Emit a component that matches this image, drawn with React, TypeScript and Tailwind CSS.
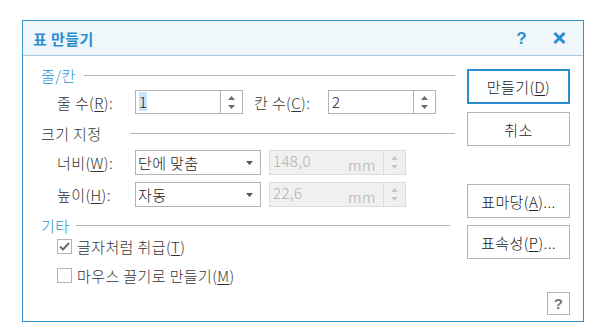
import type { ReactNode } from 'react'

const font = { fontFamily: '"Noto Sans CJK KR", "Noto Sans", sans-serif' }

function Spin({ disabled }: { disabled?: boolean }) {
  const c = disabled ? '#c8c8c8' : '#6b6b6b'
  return (
    <div className={`flex w-[22px] flex-col items-center justify-center gap-[5px] border-l ${disabled ? 'border-[#dcdcdc]' : 'border-[#b4b4b4]'}`}>
      <svg width="7" height="4" viewBox="0 0 7 4">
        <path d="M3.5 0 L7 4 L0 4 Z" fill={c} />
      </svg>
      <svg width="7" height="4" viewBox="0 0 7 4">
        <path d="M0 0 L7 0 L3.5 4 Z" fill={c} />
      </svg>
    </div>
  )
}

function Key({ k }: { k: string }) {
  return <span className="underline underline-offset-2">{k}</span>
}

function Group({ label, blue, gap, lineEnd = 0 }: { label: string; blue?: boolean; gap: number; lineEnd?: number }) {
  return (
    <div className="flex h-[17px] items-center">
      <span className={`text-[15px] leading-none ${blue ? 'text-[#2a8fd0]' : 'text-[#333]'}`}>{label}</span>
      <div className="h-px flex-1 bg-[#b4b4b4]" style={{ marginLeft: gap, marginRight: lineEnd }} />
    </div>
  )
}

function NumBox({ value, selected }: { value: string; selected?: boolean }) {
  return (
    <div className="flex h-[24px] w-[108px] border border-[#b4b4b4] bg-white">
      <div className="flex flex-1 items-start pl-[3px] pt-[1px]">
        <span className={`text-[15px] leading-[19px] text-[#222] ${selected ? 'bg-[#cce4f7]' : ''}`}>{value}</span>
      </div>
      <Spin />
    </div>
  )
}

function Select({ value }: { value: string }) {
  return (
    <div className="flex h-[25px] w-[126px] items-center justify-between border border-[#b4b4b4] bg-white pl-[2px] pr-[7px]">
      <span className="text-[15px] leading-none text-[#222]">{value}</span>
      <svg width="7" height="4" viewBox="0 0 7 4">
        <path d="M0 0 L7 0 L3.5 4 Z" fill="#555" />
      </svg>
    </div>
  )
}

function MmBox({ value }: { value: string }) {
  return (
    <div className="ml-[8px] flex h-[25px] w-[137px] border border-[#dcdcdc] bg-[#f0f0f0]">
      <div className="flex flex-1 justify-between pl-[3px] pr-[7px]">
        <span className="pt-[1px] text-[15px] leading-[18px] text-[#b0b0b0]">{value}</span>
        <span className="self-end pb-[2px] text-[15px] leading-none text-[#b0b0b0]">mm</span>
      </div>
      <Spin disabled />
    </div>
  )
}

function Btn({ children, primary }: { children: ReactNode; primary?: boolean }) {
  return (
    <div
      className={`flex items-center justify-center text-[15px] leading-none text-[#222] ${
        primary ? 'h-[35px] border-2 border-[#2a8fd0]' : 'h-[34px] border border-[#b4b4b4]'
      }`}
    >
      {children}
    </div>
  )
}

function Check({ checked, children }: { checked?: boolean; children: ReactNode }) {
  return (
    <div className="flex h-[15px] items-center pl-[16px]">
      <div className="flex h-[15px] w-[15px] items-center justify-center border border-[#b4b4b4] bg-white">
        {checked && (
          <svg width="11" height="9" viewBox="0 0 11 9">
            <path d="M1 4.5 L4 7.5 L10 1" fill="none" stroke="#6b6b6b" strokeWidth="2" />
          </svg>
        )}
      </div>
      <span className="ml-[5px] text-[15px] leading-none text-[#333]">{children}</span>
    </div>
  )
}

export default function App() {
  return (
    <div className="h-[335px] w-[596px] bg-white pl-[22px] pt-[20px] font-light tracking-[0.4px]" style={font}>
      <div className="flex h-[302px] w-[562px] flex-col border border-[#3594d0] bg-white">
        <div className="flex h-[35px] items-center border-b border-[#a8c8dd] bg-[#eff7fb] pl-[10px] pr-[17px]">
          <span className="text-[15px] font-bold leading-none text-[#2a8fd0]">표 만들기</span>
          <span className="ml-auto text-[17px] font-bold leading-none text-[#2a8fd0]" style={{ fontFamily: '"Liberation Sans", sans-serif' }}>
            ?
          </span>
          <svg className="ml-[26px]" width="13" height="12" viewBox="0 0 13 12">
            <path d="M1.5 1 L11.5 11 M11.5 1 L1.5 11" stroke="#2a8fd0" strokeWidth="3" />
          </svg>
        </div>

        <div className="flex flex-1">
          <div className="w-[432px] pl-[18px]">
            <div className="mt-[11px]">
              <Group label="줄/칸" blue gap={8} />
            </div>
            <div className="mt-[6px] flex h-[24px] items-center pl-[16px] text-[15px] leading-none text-[#333]">
              <span className="w-[78px]">
                줄 수(<Key k="R" />):
              </span>
              <NumBox value="1" selected />
              <span className="ml-[11px] w-[74px]">
                칸 수(<Key k="C" />):
              </span>
              <NumBox value="2" />
            </div>
            <div className="mt-[11px]">
              <Group label="크기 지정" gap={28} />
            </div>
            <div className="mt-[8px] flex h-[25px] items-center pl-[16px] text-[15px] leading-none text-[#333]">
              <span className="w-[78px]">
                너비(<Key k="W" />):
              </span>
              <Select value="단에 맞춤" />
              <MmBox value="148,0" />
            </div>
            <div className="mt-[7px] flex h-[25px] items-center pl-[16px] text-[15px] leading-none text-[#333]">
              <span className="w-[78px]">
                높이(<Key k="H" />):
              </span>
              <Select value="자동" />
              <MmBox value="22,6" />
            </div>
            <div className="mt-[10px]">
              <Group label="기타" blue gap={7} lineEnd={5} />
            </div>
            <div className="mt-[5px]">
              <Check checked>
                글자처럼 취급(<Key k="T" />)
              </Check>
            </div>
            <div className="mt-[14px]">
              <Check>
                마우스 끌기로 만들기(<Key k="M" />)
              </Check>
            </div>
          </div>

          <div className="ml-auto mr-[13px] flex w-[103px] flex-col">
            <div className="mt-[13px]">
              <Btn primary>
                만들기(<Key k="D" />)
              </Btn>
            </div>
            <div className="mt-[8px]">
              <Btn>취소</Btn>
            </div>
            <div className="mt-[38px]">
              <Btn>
                표마당(<Key k="A" />)...
              </Btn>
            </div>
            <div className="mt-[7px]">
              <Btn>
                표속성(<Key k="P" />)...
              </Btn>
            </div>
            <div className="mt-[33px] flex h-[23px] w-[23px] items-center justify-center self-end border border-[#b4b4b4]">
              <span className="text-[15px] font-bold leading-none text-[#777]" style={{ fontFamily: '"Liberation Sans", sans-serif' }}>
                ?
              </span>
            </div>
          </div>
        </div>
      </div>
    </div>
  )
}
